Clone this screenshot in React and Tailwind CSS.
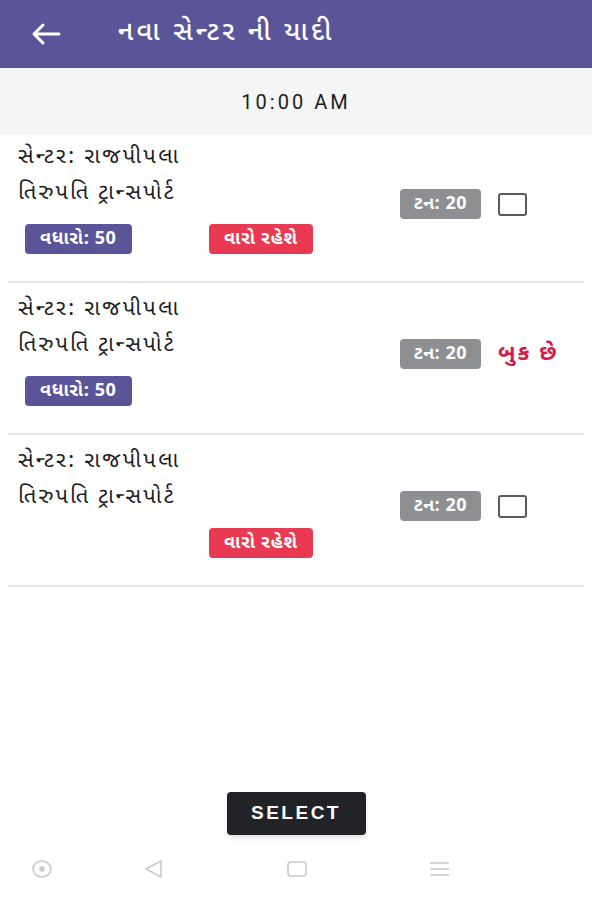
import React from "react";

const rows = [
  { extra: true, status: true, booked: false },
  { extra: true, status: false, booked: true },
  { extra: false, status: true, booked: false },
];

const font = { fontFamily: "'Noto Sans Gujarati', 'Lohit Gujarati', 'Noto Sans', Roboto, sans-serif" };

const Row = ({ extra, status, booked, first }) => {
  return (
    <div className="mx-2 border-b-2 border-[#e6e6e6] flex">
      <div className={first ? "flex-1 pl-[10px] pt-[5px] pb-[27px]" : "flex-1 pl-[10px] pt-[9px] pb-[27px]"}>
        <p className="text-[22px] leading-[36px] tracking-[2.3px] text-[#1d1d1d]">સેન્ટર: રાજપીપલા</p>
        <p className="text-[22px] leading-[36px] tracking-[2px] text-[#1d1d1d]">તિરુપતિ ટ્રાન્સપોર્ટ</p>
        <div className="flex h-[30px] mt-[12px]">
          <div className="w-[191px] pl-[7px]">
            {extra && (
              <span className="inline-flex items-center h-[30px] px-[15px] rounded-[4px] bg-[#5a5499] text-white text-[18px] tracking-[0.6px] font-bold">
                વધારો: 50
              </span>
            )}
          </div>
          {status && (
            <span className="inline-flex items-center h-[30px] px-[15px] rounded-[4px] bg-[#e83a52] text-white text-[18px] tracking-[0.8px] font-bold">
              વારો રહેશે
            </span>
          )}
        </div>
      </div>
      <div className="flex items-center pr-[26px] pb-[8px]">
        <span className="inline-flex items-center h-[30px] px-[14px] rounded-[4px] bg-[#8e8f92] text-white text-[18px] tracking-[0.5px] font-bold">
          ટન: 20
        </span>
        <div className="ml-[17px] w-[60px]">
          {booked ? (
            <span className="text-[#d6194a] text-[22px] tracking-[2px] font-bold whitespace-nowrap">બુક છે</span>
          ) : (
            <div className="w-[29px] h-[23px] rounded-[3px] border-2 border-[#5b5b5b]" />
          )}
        </div>
      </div>
    </div>
  );
};

const App = () => {
  return (
    <div className="w-[592px] h-[900px] bg-white flex flex-col" style={font}>
      <div className="h-[68px] bg-[#5a5499] flex items-center shrink-0">
        <svg className="ml-[31px]" width="30" height="24" viewBox="0 0 30 24" fill="none" stroke="white" strokeWidth="3" strokeLinecap="round" strokeLinejoin="round">
          <path d="M28 12H3M12 3l-9 9 9 9" />
        </svg>
        <h1 className="ml-[57px] text-white text-[27px] tracking-[3.2px] font-medium">નવા સેન્ટર ની યાદી</h1>
      </div>
      <div className="h-[67px] bg-[#f3f5f6] flex items-center justify-center shrink-0">
        <span className="text-[20px] tracking-[3px] text-[#1d1d1d]" style={{ fontFamily: "Roboto, sans-serif" }}>10:00 AM</span>
      </div>
      <div className="flex-1">
        {rows.map((r, i) => (
          <Row key={i} first={i === 0} {...r} />
        ))}
      </div>
      <div className="flex justify-center pb-[18px]">
        <button className="w-[139px] h-[43px] rounded-[4px] bg-[#222326] text-white text-[19px] font-bold tracking-[2.5px] shadow-md" style={{ fontFamily: "'Liberation Sans', Arial, sans-serif" }}>
          SELECT
        </button>
      </div>
      <div className="h-[47px] flex items-start pt-[5px] text-[#c8c8c8] shrink-0">
        <svg className="ml-[31px]" width="22" height="22" viewBox="0 0 22 22" fill="none" stroke="currentColor" strokeWidth="1.5">
          <ellipse cx="11" cy="11" rx="9" ry="8" />
          <circle cx="11" cy="11" r="2" fill="currentColor" />
        </svg>
        <svg className="ml-[90px]" width="22" height="22" viewBox="0 0 22 22" fill="none" stroke="currentColor" strokeWidth="1.5" strokeLinejoin="round">
          <path d="M18 3v16L3 11z" />
        </svg>
        <svg className="ml-[121px]" width="22" height="22" viewBox="0 0 22 22" fill="none" stroke="currentColor" strokeWidth="1.5">
          <rect x="2" y="4" width="18" height="14" rx="3" />
        </svg>
        <svg className="ml-[120px]" width="22" height="22" viewBox="0 0 22 22" fill="none" stroke="currentColor" strokeWidth="1.5">
          <path d="M2 5h19M2 11h19M2 17h19" />
        </svg>
      </div>
    </div>
  );
};

export default App;
